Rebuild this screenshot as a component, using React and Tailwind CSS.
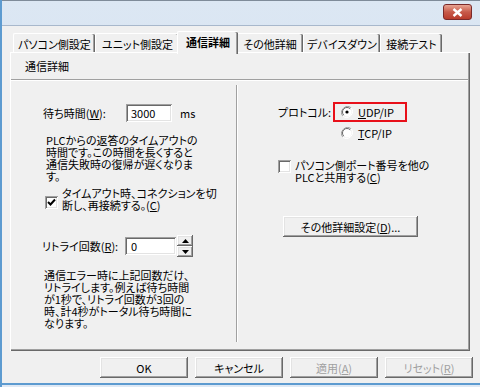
import React from "react";

const RAISED = "shadow-[inset_-1px_-1px_#696969,inset_1px_1px_#ffffff,inset_-2px_-2px_#a0a0a0,inset_2px_2px_#e3e3e3]";
const SUNKEN = "shadow-[inset_1px_1px_#a0a0a0,inset_-1px_-1px_#ffffff,inset_2px_2px_#696969,inset_-2px_-2px_#e3e3e3]";

function Tab({ label, w, selected }) {
  if (selected) {
    return (
      <div
        className={`relative z-10 -mx-[2px] mb-[-2px] h-[23px] ${w} rounded-t-[2px] border-l border-t border-white bg-[#f0f0f0] shadow-[inset_-1px_0_#696969,inset_-2px_0_#a0a0a0] flex justify-center pt-[4px]`}
      >
        <span className="font-semibold whitespace-nowrap">{label}</span>
      </div>
    );
  }
  return (
    <div
      className={`h-[19px] ${w} rounded-t-[2px] border-l border-t border-white bg-[#f0f0f0] shadow-[inset_-1px_0_#696969,inset_-2px_0_#a0a0a0] flex justify-center pt-[4px]`}
    >
      <span className="whitespace-nowrap">{label}</span>
    </div>
  );
}

function Check({ checked }) {
  return (
    <div className={`w-[13px] h-[13px] bg-white ${SUNKEN} flex items-center justify-center shrink-0`}>
      {checked && (
        <svg width="9" height="9" viewBox="0 0 9 9">
          <path d="M1 4 L3.5 6.5 L8 1.5" stroke="#000" strokeWidth="2" fill="none" />
        </svg>
      )}
    </div>
  );
}

function Radio({ on }) {
  return (
    <svg width="12" height="12" viewBox="0 0 12 12" className="shrink-0">
      <path d="M10.2 1.8 A6 6 0 0 0 1.8 10.2" stroke="#a0a0a0" fill="none" />
      <path d="M1.8 10.2 A6 6 0 0 0 10.2 1.8" stroke="#ffffff" fill="none" />
      <circle cx="6" cy="6" r="4.5" fill="#fff" />
      <path d="M9.2 2.8 A4.5 4.5 0 0 0 2.8 9.2" stroke="#696969" fill="none" />
      {on && <circle cx="6" cy="6" r="1.6" fill="#000" />}
    </svg>
  );
}

function Btn({ children, disabled, w = "w-[88px]" }) {
  return (
    <div
      className={`${w} h-[21px] bg-[#f0f0f0] ${RAISED} flex items-center justify-center whitespace-nowrap ${disabled ? "text-[#a0a0a0]" : "text-black"}`}
    >
      {children}
    </div>
  );
}

export default function App() {
  return (
    <div className="w-[480px] h-[387px] overflow-hidden flex flex-col bg-gradient-to-b from-[#dce7f3] to-[#cddcee] text-[11px] leading-[12px] text-black font-['Noto_Sans_CJK_JP','Noto_Sans',sans-serif] [font-feature-settings:'palt'] border-l-2 border-l-[#5d9bd0]">
      {/* title bar */}
      <div className="h-[25px] shrink-0 flex justify-end pt-[3px] pr-[8px] border-t border-t-[#7f8b99]">
        <div className="w-[29px] h-[16px] rounded-[3px] border border-[#7a2a2a] bg-gradient-to-b from-[#e8a493] via-[#c75a4a] to-[#b93b2b] flex items-center justify-center">
          <svg width="11" height="9" viewBox="0 0 11 9">
            <path d="M1.5 1 L9.5 8 M9.5 1 L1.5 8" stroke="#ffffff" strokeWidth="2.4" />
          </svg>
        </div>
      </div>
      {/* client */}
      <div className="h-[358px] shrink-0 bg-[#f0f0f0] border-t border-t-[#a8b8cc] pl-[8px] pt-[5px]">
        {/* tabs */}
        <div className="flex items-end h-[21px] pl-[3px]">
          <Tab label="パソコン側設定" w="w-[82px]" />
          <Tab label="ユニット側設定" w="w-[84px]" />
          <Tab label="通信詳細" w="w-[61px]" selected />
          <Tab label="その他詳細" w="w-[67px]" />
          <Tab label="デバイスダウン" w="w-[77px]" />
          <Tab label="接続テスト" w="w-[62px]" />
        </div>
        {/* panel */}
        <div className="w-[460px] h-[299px] border-l border-t border-white shadow-[inset_-1px_-1px_#696969,inset_-2px_-2px_#a0a0a0] flex flex-col">
          <div className="h-[26px] pl-[14px] pt-[7px]">通信詳細</div>
          <div className="h-[2px] mr-[2px] border-t border-t-[#a0a0a0] border-b border-b-white" />
          <div className="flex flex-1">
            {/* left column */}
            <div className="w-[225px] flex flex-col pl-[32px] pt-[23px] whitespace-nowrap">
              <div className="flex items-center h-[18px]">
                <span className="w-[83px]">
                  待ち時間(<span className="underline">W</span>):
                </span>
                <div className={`w-[46px] h-[18px] bg-white ${SUNKEN} pl-[5px] flex items-center`}>3000</div>
                <span className="ml-[8px]">ms</span>
              </div>
              <div className="mt-[12px] pl-[3px] flex flex-col">
                <span>PLCからの返答のタイムアウトの</span>
                <span>時間です。この時間を長くすると</span>
                <span>通信失敗時の復帰が遅くなりま</span>
                <span>す。</span>
              </div>
              <div className="mt-[5px] flex pl-[2px]">
                <div className="mt-[9px]">
                  <Check checked />
                </div>
                <div className="ml-[4px] flex flex-col">
                  <span>タイムアウト時、コネクションを切</span>
                  <span>
                    断し、再接続する。(<span className="underline">C</span>)
                  </span>
                </div>
              </div>
              <div className="mt-[24px] flex items-center h-[22px]">
                <span className="w-[83px] -ml-[1px]">
                  リトライ回数(<span className="underline">R</span>):
                </span>
                <div className={`w-[51px] h-[18px] bg-white ${SUNKEN} pl-[6px] flex items-center`}>0</div>
                <div className="flex flex-col ml-[1px]">
                  <div className={`w-[16px] h-[11px] bg-[#f0f0f0] ${RAISED} flex items-center justify-center`}>
                    <svg width="7" height="4" viewBox="0 0 7 4"><path d="M0 4 L3.5 0 L7 4 Z" fill="#000" /></svg>
                  </div>
                  <div className={`w-[16px] h-[11px] bg-[#f0f0f0] ${RAISED} flex items-center justify-center`}>
                    <svg width="7" height="4" viewBox="0 0 7 4"><path d="M0 0 L3.5 4 L7 0 Z" fill="#000" /></svg>
                  </div>
                </div>
              </div>
              <div className="mt-[12px] pl-[1px] flex flex-col">
                <span>通信エラー時に上記回数だけ、</span>
                <span>リトライします。例えば待ち時間</span>
                <span>が1秒で、リトライ回数が3回の</span>
                <span>時、計4秒がトータル待ち時間に</span>
                <span>なります。</span>
              </div>
            </div>
            {/* divider */}
            <div className="mt-[4px] mb-[9px] w-[2px] border-l border-l-[#a0a0a0] border-r border-r-white" />
            {/* right column */}
            <div className="flex-1 flex flex-col pl-[40px] pt-[21px] whitespace-nowrap">
              <div className="flex items-center h-[20px]">
                <span className="w-[55px]">プロトコル:</span>
                <div className="w-[74px] h-[20px] border-2 border-[#e8101a] flex items-center pl-[6px]">
                  <Radio on />
                  <span className="ml-[5px]">
                    <span className="underline">U</span>DP/IP
                  </span>
                </div>
              </div>
              <div className="flex items-center h-[12px] mt-[5px] pl-[63px]">
                <Radio />
                <span className="ml-[5px]">
                  <span className="underline">T</span>CP/IP
                </span>
              </div>
              <div className="flex mt-[20px]">
                <div className="mt-[1px]">
                  <Check />
                </div>
                <div className="ml-[4px] flex flex-col">
                  <span>パソコン側ポート番号を他の</span>
                  <span>
                    PLCと共用する(<span className="underline">C</span>)
                  </span>
                </div>
              </div>
              <div className="mt-[33px] pl-[5px]">
                <Btn w="w-[135px]">
                  <span>
                    その他詳細設定(<span className="underline">D</span>)...
                  </span>
                </Btn>
              </div>
            </div>
          </div>
        </div>
        {/* bottom buttons */}
        <div className="flex gap-[7px] pl-[90px] mt-[6px]">
          <Btn>OK</Btn>
          <Btn>キャンセル</Btn>
          <Btn disabled>
            <span>
              適用(<span className="underline">A</span>)
            </span>
          </Btn>
          <Btn disabled>
            <span>
              リセット(<span className="underline">R</span>)
            </span>
          </Btn>
        </div>
      </div>
      <div className="h-[2px] shrink-0 bg-[#5d9bd0]" />
      <div className="flex-1 bg-[#dfe9f5]" />
    </div>
  );
}
